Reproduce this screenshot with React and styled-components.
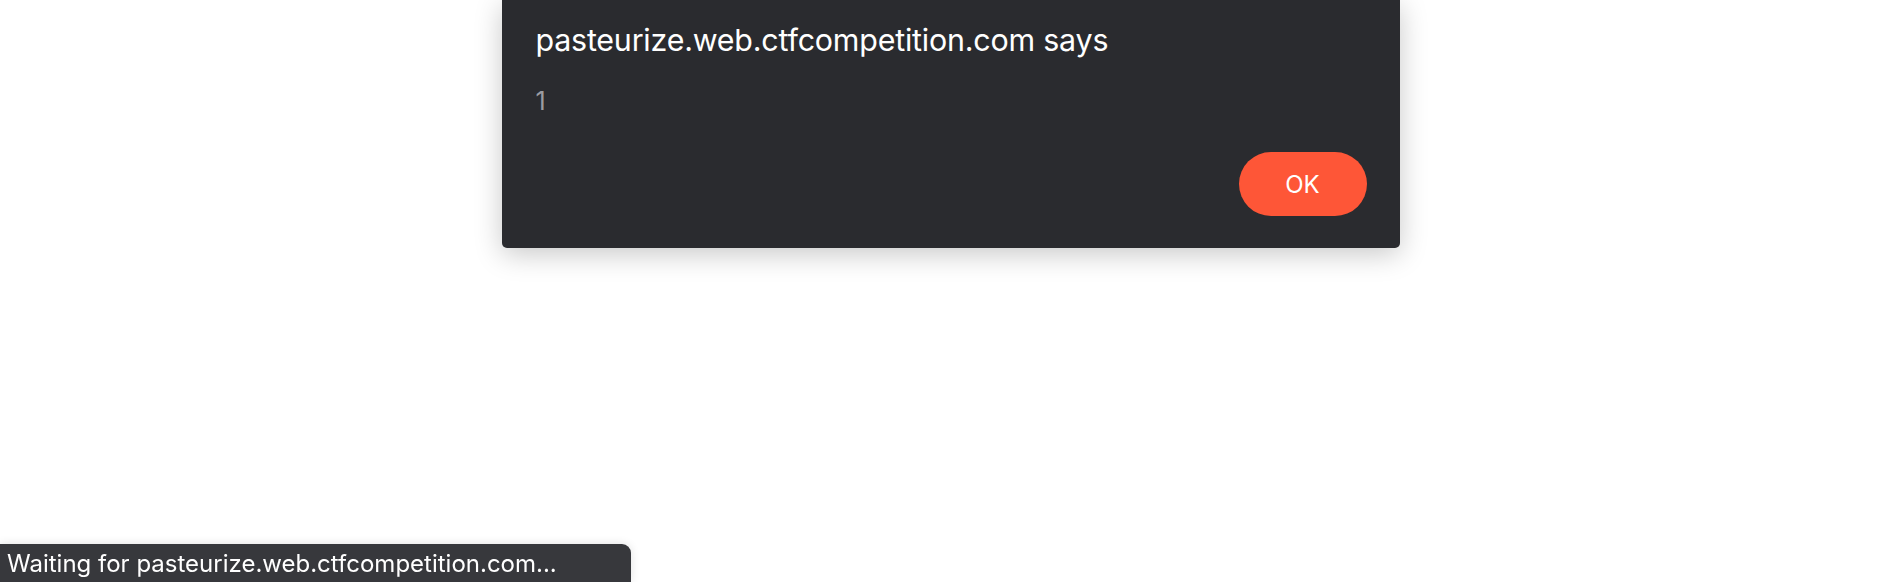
import React from 'react';
import styled, {createGlobalStyle} from 'styled-components';

const GlobalStyle = createGlobalStyle`
  html, body {
    margin: 0;
    padding: 0;
    background: #ffffff;
    font-family: Inter, "Noto Sans", sans-serif;
  }
`;

const Page = styled.div`
  width: 100vw;
  height: 100vh;
  box-sizing: border-box;
  padding-left: 7px;
  display: flex;
  justify-content: center;
  align-items: flex-start;
  overflow: hidden;
`;

const Dialog = styled.div`
  width: 898px;
  height: 248px;
  box-sizing: border-box;
  padding: 20px 33px 32px 34px;
  background: #2a2b2f;
  border-radius: 0 0 5px 5px;
  box-shadow: 0px 6px 28px 0px rgba(0,0,0,0.22);
  display: flex;
  flex-direction: column;
`;

const Title = styled.h1`
  margin: 0;
  font-size: 30.4px;
  font-weight: 400;
  line-height: 40px;
  color: #ffffff;
  letter-spacing: -0.2px;
`;

const Message = styled.p`
  margin: 26px 0 0 0;
  font-size: 25px;
  line-height: 30px;
  color: #9b9ca1;
`;

const Actions = styled.div`
  margin-top: auto;
  display: flex;
  justify-content: flex-end;
`;

const Button = styled.button`
  width: 128px;
  height: 64px;
  border: none;
  border-radius: 32px;
  background: #fe5637;
  color: #ffffff;
  font-family: Inter, "Noto Sans", sans-serif;
  font-size: 24px;
  cursor: pointer;
`;

const StatusBar = styled.div`
  position: fixed;
  left: 0;
  bottom: 0;
  height: 38px;
  padding: 0 74px 0 7px;
  display: flex;
  align-items: center;
  background: #37383c;
  border-top-right-radius: 9px;
  box-shadow: 0px 0px 10px 0px rgba(0,0,0,0.12);
  color: #ffffff;
  font-size: 24px;
  white-space: nowrap;
`;

export default function App() {
  return (
    <>
      <GlobalStyle />
      <Page>
        <Dialog>
          <Title>pasteurize.web.ctfcompetition.com says</Title>
          <Message>1</Message>
          <Actions>
            <Button>OK</Button>
          </Actions>
        </Dialog>
      </Page>
      <StatusBar>Waiting for pasteurize.web.ctfcompetition.com...</StatusBar>
    </>
  );
}
